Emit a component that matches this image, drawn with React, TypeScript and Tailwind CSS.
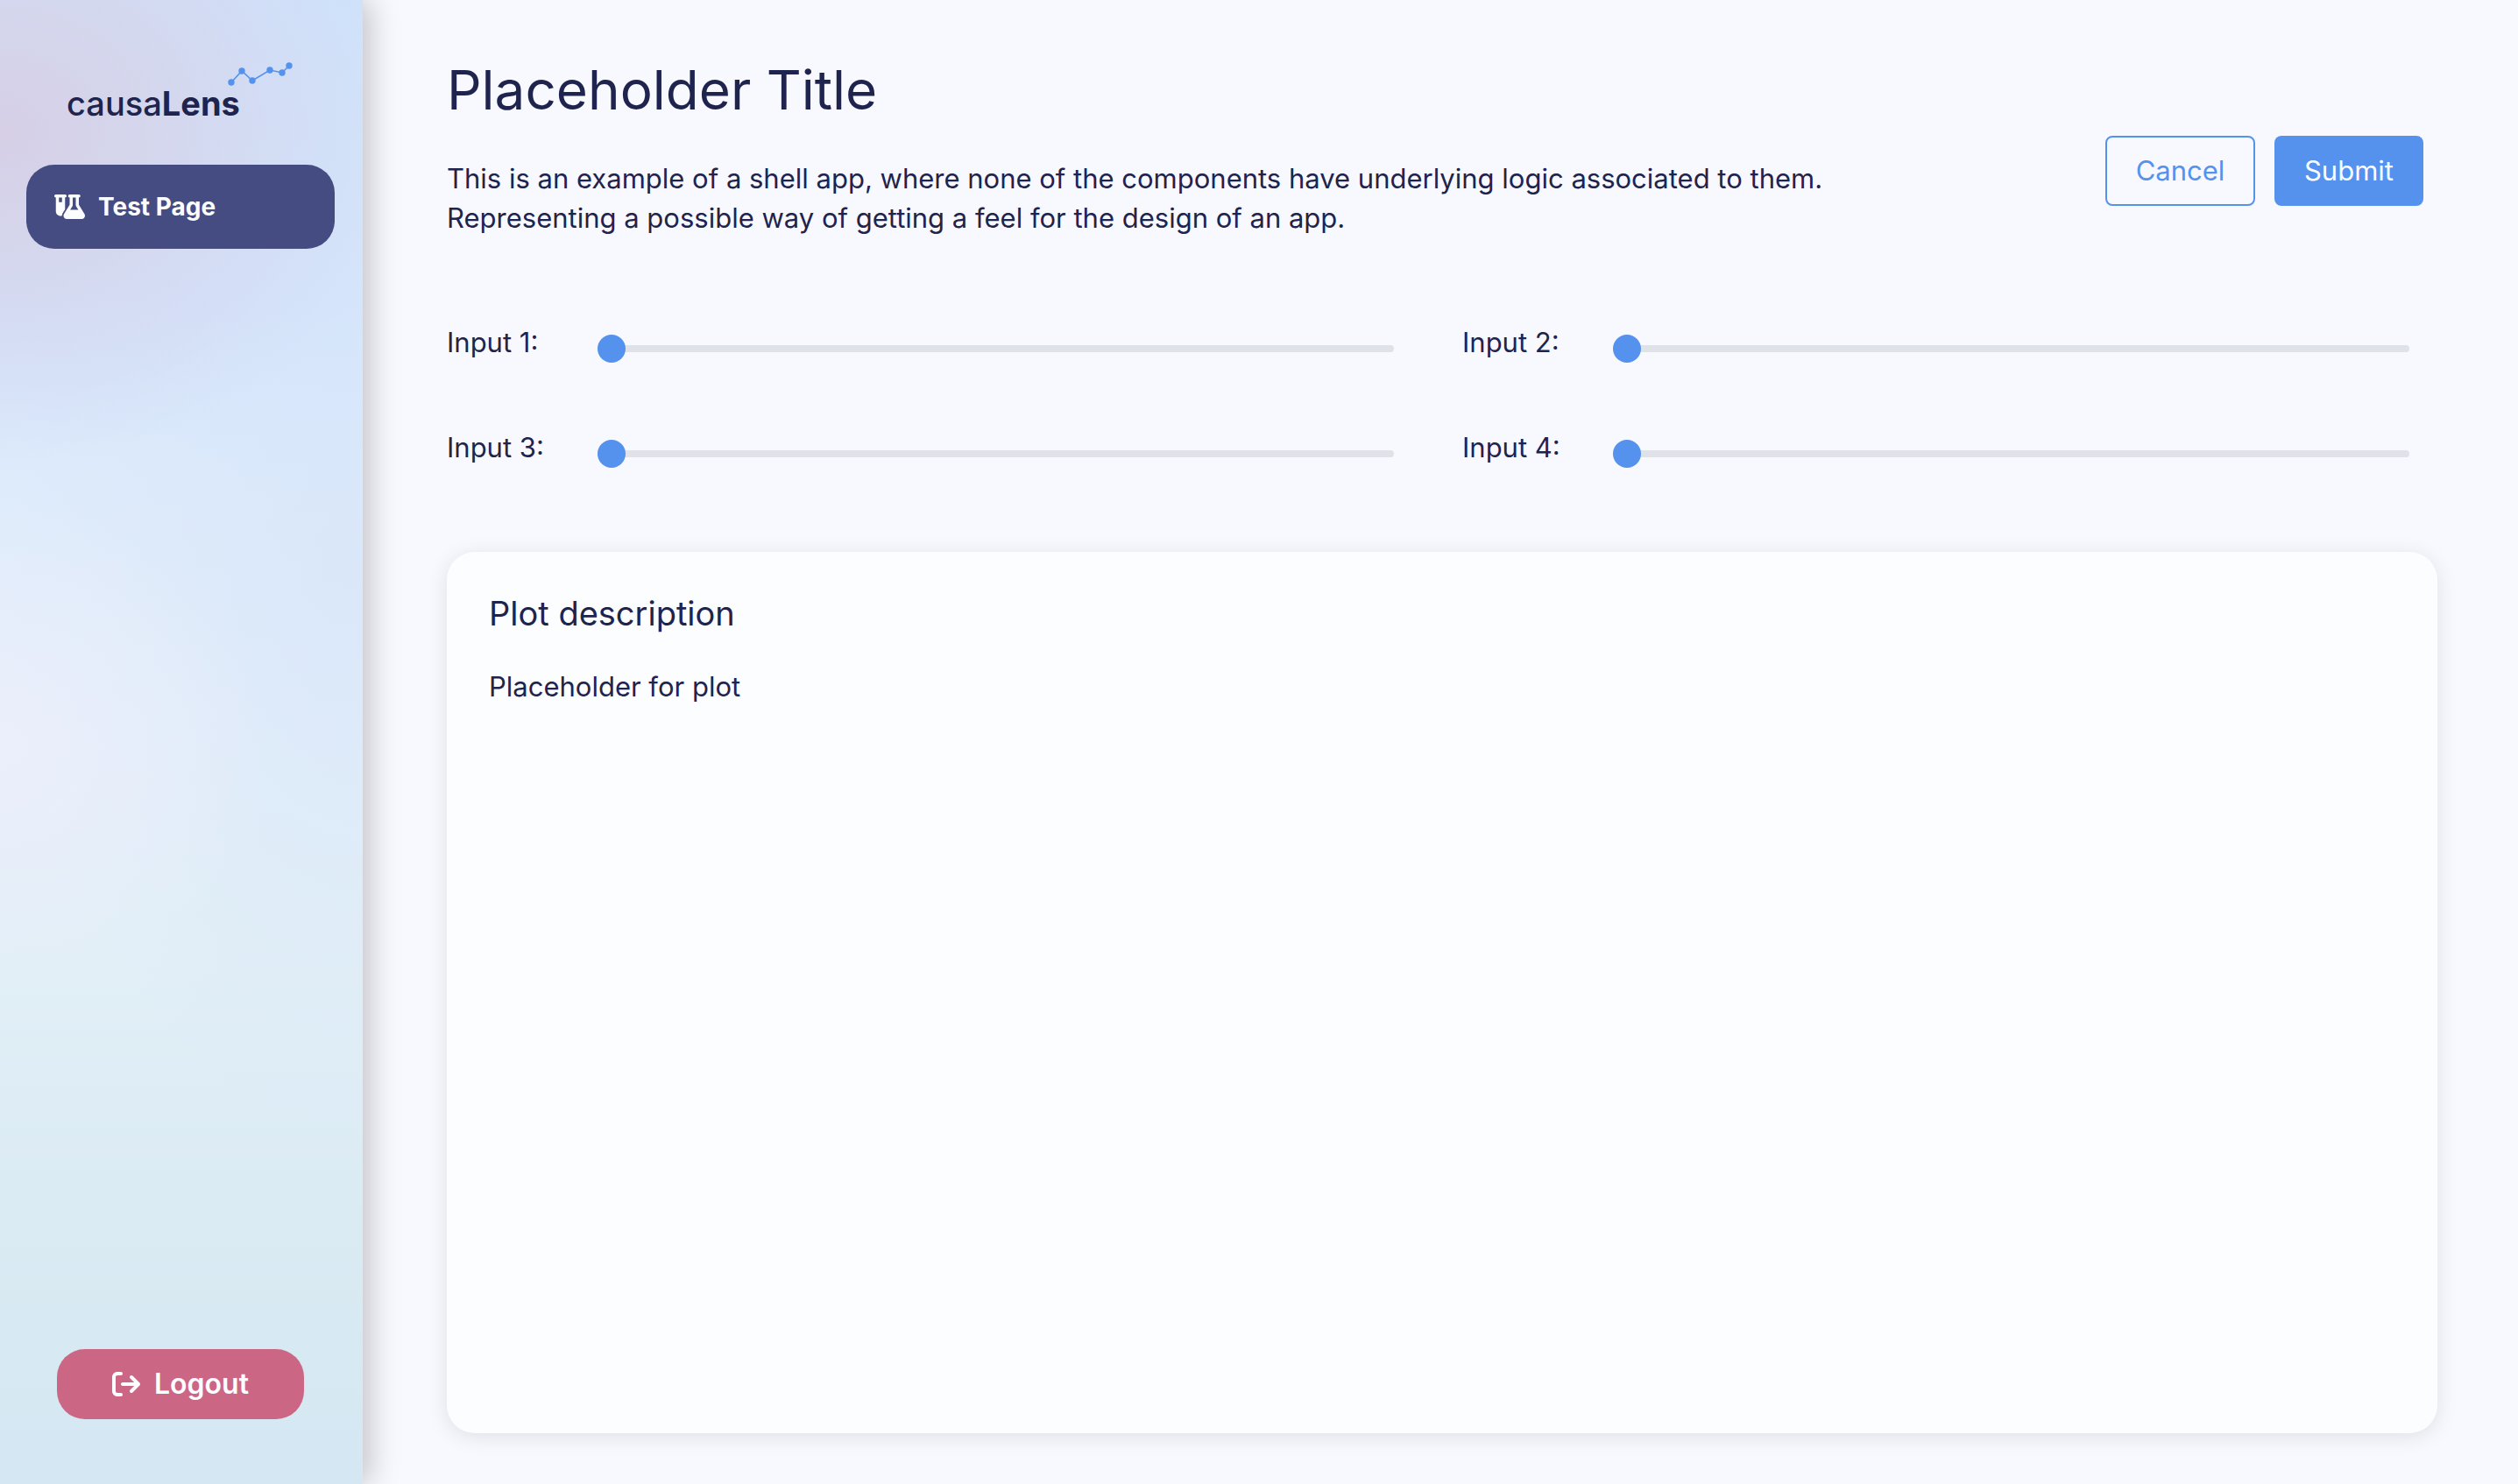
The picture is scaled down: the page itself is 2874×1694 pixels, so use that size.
import { FaFlaskVial, FaArrowRightFromBracket } from "react-icons/fa6";

const logoPoints: [number, number][] = [
  [4, 23],
  [16, 10],
  [28, 21],
  [48, 9],
  [62, 12],
  [70, 4],
];

function Logo() {
  return (
    <div className="relative h-9 pl-[46px] text-[38px] leading-9 whitespace-nowrap">
      <span className="font-medium">causa</span>
      <span className="font-bold">Lens</span>
      <svg
        className="absolute -top-[29px] left-[230px] h-7 w-[76px]"
        viewBox="0 0 76 28"
        fill="#5492ee"
        aria-hidden="true"
      >
        <polyline
          points={logoPoints.map((p) => p.join(",")).join(" ")}
          fill="none"
          stroke="#5492ee"
          strokeWidth="1.6"
        />
        {logoPoints.map(([x, y]) => (
          <circle key={x} cx={x} cy={y} r="3.7" />
        ))}
      </svg>
    </div>
  );
}

function Sidebar() {
  return (
    <aside className="z-10 flex w-[414px] shrink-0 flex-col bg-[radial-gradient(ellipse_470px_380px_at_0px_150px,#d6cfe6_0%,#d5d4eacc_40%,#d3d8f180_72%,transparent_100%),radial-gradient(ellipse_320px_280px_at_0px_850px,#ebeefb_0%,transparent_100%),radial-gradient(ellipse_400px_650px_at_414px_640px,#d5e4f9a0_0%,transparent_100%),linear-gradient(180deg,#cfe3fb_0%,#d4e5fc_20%,#deebfb_32%,#e4eff9_50%,#e2eff7_64%,#dbebf4_80%,#d7e9f2_90%,#d5e7f2_100%)] pt-[100px] pr-8 pb-[74px] pl-[30px] shadow-[8px_0_32px_rgba(0,0,0,0.22)]">
      <Logo />
      <nav className="mt-[52px]">
        <a
          href="#test-page"
          className="flex h-24 items-center gap-[15px] rounded-[32px] bg-[#454c82] pl-8 text-[28px] font-bold text-[#fcfdff]"
        >
          <FaFlaskVial className="h-7 w-[35px]" />
          Test Page
        </a>
      </nav>
      <button
        type="button"
        className="mx-[35px] mt-auto flex h-20 items-center justify-center gap-4 rounded-[32px] bg-[#cb6684] text-[32px] font-semibold text-[#fcfdff]"
      >
        <FaArrowRightFromBracket className="size-8" />
        Logout
      </button>
    </aside>
  );
}

function SliderField({ index }: { index: number }) {
  const id = `input-${index}`;
  return (
    <div className="flex h-[60px] items-start pr-4">
      <label htmlFor={id} className="w-[172px] shrink-0 leading-[45px]">
        Input {index}:
      </label>
      <input
        id={id}
        type="range"
        min={0}
        max={100}
        defaultValue={0}
        className="h-[60px] min-w-0 flex-1 cursor-pointer appearance-none bg-transparent [&::-webkit-slider-runnable-track]:h-2 [&::-webkit-slider-runnable-track]:rounded-full [&::-webkit-slider-runnable-track]:bg-[#dfe2e9] [&::-webkit-slider-thumb]:-mt-3 [&::-webkit-slider-thumb]:size-8 [&::-webkit-slider-thumb]:appearance-none [&::-webkit-slider-thumb]:rounded-full [&::-webkit-slider-thumb]:bg-[#5492ee]"
      />
    </div>
  );
}

export default function App() {
  return (
    <div className="flex min-h-screen bg-[#f8f9ff] font-['Inter',sans-serif] text-[31px] text-[#1e244d]">
      <Sidebar />
      <main className="flex min-w-0 flex-1 flex-col pt-[63px] pr-[92px] pb-[58px] pl-24">
        <header className="flex items-end justify-between pr-4">
          <div>
            <h1 className="text-[62px] leading-[80px]">Placeholder Title</h1>
            <p className="mt-[38px] leading-[45px]">
              This is an example of a shell app, where none of the components have underlying logic associated to them.
              <br />
              Representing a possible way of getting a feel for the design of an app.
            </p>
          </div>
          <div className="flex shrink-0 gap-[22px] pb-9">
            <button type="button" className="h-20 w-[171px] rounded-lg border-2 border-[#5492ee] text-[#5492ee]">
              Cancel
            </button>
            <button type="button" className="h-20 w-[170px] rounded-lg bg-[#5492ee] text-[#fcfdff]">
              Submit
            </button>
          </div>
        </header>
        <section className="mt-[97px] grid grid-cols-2 gap-x-[62px] gap-y-[60px] pr-4">
          {[1, 2, 3, 4].map((n) => (
            <SliderField key={n} index={n} />
          ))}
        </section>
        <section className="mt-[82px] flex-1 rounded-[32px] bg-[#fcfdff] px-12 py-[46px] shadow-[0_4px_24px_rgba(0,0,0,0.1)]">
          <h2 className="text-[38px] leading-[48px]">Plot description</h2>
          <p className="mt-[37px] leading-[45px]">Placeholder for plot</p>
        </section>
      </main>
    </div>
  );
}
